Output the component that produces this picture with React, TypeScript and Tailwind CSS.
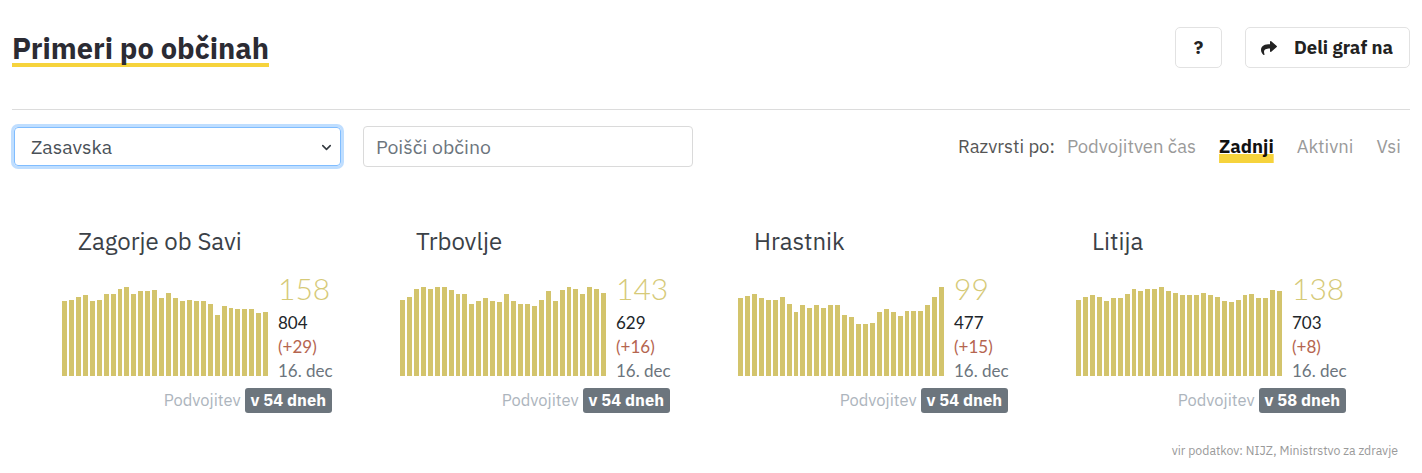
import React from 'react';
import { ChevronDown } from 'lucide-react';
import { FaShare } from 'react-icons/fa';

type Place = {
  name: string;
  active: number;
  total: number;
  diff: number;
  days: number;
  bars: number[];
};

const places: Place[] = [
  {
    name: 'Zagorje ob Savi',
    active: 158,
    total: 804,
    diff: 29,
    days: 54,
    bars: [75, 76, 79, 81, 75, 76, 82, 82, 87, 89, 82, 85, 85, 86, 78, 83, 78, 75, 76, 75, 75, 72, 61, 70, 68, 67, 67, 67, 63, 64],
  },
  {
    name: 'Trbovlje',
    active: 143,
    total: 629,
    diff: 16,
    days: 54,
    bars: [76, 79, 87, 89, 87, 89, 89, 86, 82, 82, 72, 75, 78, 75, 74, 82, 75, 72, 72, 70, 76, 85, 75, 86, 89, 87, 82, 89, 87, 83],
  },
  {
    name: 'Hrastnik',
    active: 99,
    total: 477,
    diff: 15,
    days: 54,
    bars: [78, 80, 82, 78, 76, 76, 79, 72, 64, 71, 68, 71, 68, 71, 71, 61, 59, 52, 52, 53, 64, 67, 64, 60, 65, 65, 65, 71, 79, 89],
  },
  {
    name: 'Litija',
    active: 138,
    total: 703,
    diff: 8,
    days: 58,
    bars: [76, 79, 81, 79, 75, 78, 78, 82, 87, 85, 87, 87, 89, 85, 83, 81, 81, 81, 83, 81, 79, 75, 74, 76, 81, 82, 78, 78, 86, 85],
  },
];

const PlaceCard = ({ place }: { place: Place }) => {
  return (
    <div className="w-[270px]">
      <h3 className="pl-4 text-[24px] leading-[28px] text-[#3b4147]">{place.name}</h3>

      {/* chart + numbers */}
      <div className="mt-[15px] flex items-start">
        <div className="mt-[6px] flex h-[100px] w-[206px] shrink-0 items-end gap-[2px]">
          {place.bars.map((h, i) => (
            <div key={i} className="flex-1 bg-[#d3c46c]" style={{ height: `${h}px` }} />
          ))}
        </div>
        <div className="ml-[10px] whitespace-nowrap font-['Lato',sans-serif]">
          <div className="mb-[5px] text-[30px] font-light leading-[36px] text-[#d6ca78]">{place.active}</div>
          <div className="text-[17px] leading-[24px] text-[#212529]">{place.total}</div>
          <div className="text-[17px] leading-[24px] text-[#b5654f]">(+{place.diff})</div>
          <div className="text-[17px] leading-[24px] text-[#6c757d]">16. dec</div>
        </div>
      </div>

      {/* doubling time */}
      <div className="mt-[5px] flex items-center justify-end gap-[4px]">
        <span className="text-[16.5px] text-[#adb5bd]">Podvojitev</span>
        <span className="flex h-[25px] items-center whitespace-nowrap rounded-[3px] bg-[#6c757d] px-[6px] text-[16.5px] font-bold text-white">
          v {place.days} dneh
        </span>
      </div>
    </div>
  );
};

const App = () => {
  return (
    <div className="h-[473px] w-[1422px] overflow-hidden bg-white px-3 font-['IBM_Plex_Sans','Noto_Sans',sans-serif]">
      {/* Header */}
      <div className="flex items-center justify-between pt-[27px]">
        <h2 className="text-[29px] font-bold leading-[40px] text-[#2b2b33] underline decoration-[#f6d33c] decoration-[4px] underline-offset-[4px] [text-decoration-skip-ink:none]">
          Primeri po občinah
        </h2>
        <div className="flex items-center gap-[23px]">
          <button className="flex h-[41px] w-[47px] items-center justify-center rounded-[5px] border border-[#e2e2e2] text-[19px] font-bold text-[#222]">
            ?
          </button>
          <button className="flex h-[41px] items-center gap-[17px] rounded-[5px] border border-[#e2e2e2] pl-[15px] pr-[16px] text-[18.5px] font-bold text-[#222]">
            <FaShare className="text-[16px]" />
            Deli graf na
          </button>
        </div>
      </div>

      <div className="mt-[41px] border-t border-[#dcdcdc]" />

      {/* Controls */}
      <div className="mt-[16px] flex items-center">
        <div className="relative ml-[2px] flex h-[39px] w-[327px] items-center rounded-[4px] border border-[#80bdff] pl-[16px] text-[19.5px] text-[#495057] shadow-[0_0_0_3px_rgba(0,123,255,0.25)]">
          Zasavska
          <ChevronDown className="absolute right-[6px] top-[12px]" size={15} strokeWidth={2.5} color="#343a40" />
        </div>
        <div className="ml-[22px] flex h-[41px] w-[330px] items-center rounded-[4px] border border-[#dadada] pl-[12px] text-[19.5px] text-[#6c757d]">
          Poišči občino
        </div>
        <div className="ml-auto flex items-center pr-[9px] text-[18.5px]">
          <span className="text-[#555]">Razvrsti po:</span>
          <div className="ml-[12px] flex items-center gap-[23px] text-[#9a9a9a]">
            <span>Podvojitven čas</span>
            <span className="font-bold text-[#111] underline decoration-[#f6d33c] decoration-[9px] underline-offset-[1px] [text-decoration-skip-ink:none]">
              Zadnji
            </span>
            <span>Aktivni</span>
            <span>Vsi</span>
          </div>
        </div>
      </div>

      {/* Cards */}
      <div className="mt-[60px] grid grid-cols-[repeat(4,338px)] pl-[50px]">
        {places.map((p) => (
          <PlaceCard key={p.name} place={p} />
        ))}
      </div>

      <div className="mt-[28px] pr-3 text-right text-[12.3px] text-[#9a9a9a]">
        vir podatkov: NIJZ, Ministrstvo za zdravje
      </div>
    </div>
  );
};

export default App;
